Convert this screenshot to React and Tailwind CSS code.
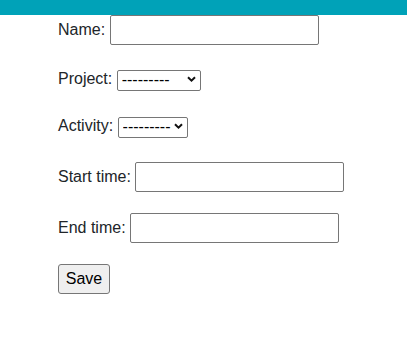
import React from 'react';

const Chevron = () => (
  <svg width="9" height="6" viewBox="0 0 9 6" className="pointer-events-none absolute right-[5px] top-1/2 -translate-y-1/2">
    <path d="M1 1.2 L4.5 4.6 L8 1.2" fill="none" stroke="#111" strokeWidth="2" />
  </svg>
);

const Field = ({ label, children, className }) => (
  <div className={`flex items-center ${className}`}>
    <label className="mr-[4.45px]">{label}</label>
    {children}
  </div>
);

const Select = ({ width }) => (
  <div className={`relative h-[21px] ${width}`}>
    <select className="h-full w-full appearance-none rounded-[2px] border border-[#767676] bg-white pl-[4px] text-[16px] leading-none text-black outline-none">
      <option>---------</option>
    </select>
    <Chevron />
  </div>
);

const TextInput = () => (
  <input type="text" className="h-[30px] w-[209px] rounded-[2px] border border-[#767676] bg-white px-1 outline-none" />
);

export default function App() {
  return (
    <div className="min-h-screen bg-white text-[16px] text-[#212529]" style={{ fontFamily: '"Liberation Sans", Arial, sans-serif' }}>
      <div className="h-[15px] bg-[#00a2b8]" />
      <form className="flex flex-col items-start pl-[58px]">
        <Field label="Name:" className="h-[30px]">
          <TextInput />
        </Field>
        <Field label="Project:" className="mt-[23px] h-[21px]">
          <Select width="w-[84px]" />
        </Field>
        <Field label="Activity:" className="mt-[26px] h-[21px]">
          <Select width="w-[70px]" />
        </Field>
        <Field label="Start time:" className="mt-[26px] h-[30px]">
          <TextInput />
        </Field>
        <Field label="End time:" className="mt-[21px] h-[30px]">
          <TextInput />
        </Field>
        <button type="submit" className="mt-[21px] h-[30px] w-[52px] rounded-[3px] border border-[#767676] bg-[#efefef] text-black">
          Save
        </button>
      </form>
    </div>
  );
}
